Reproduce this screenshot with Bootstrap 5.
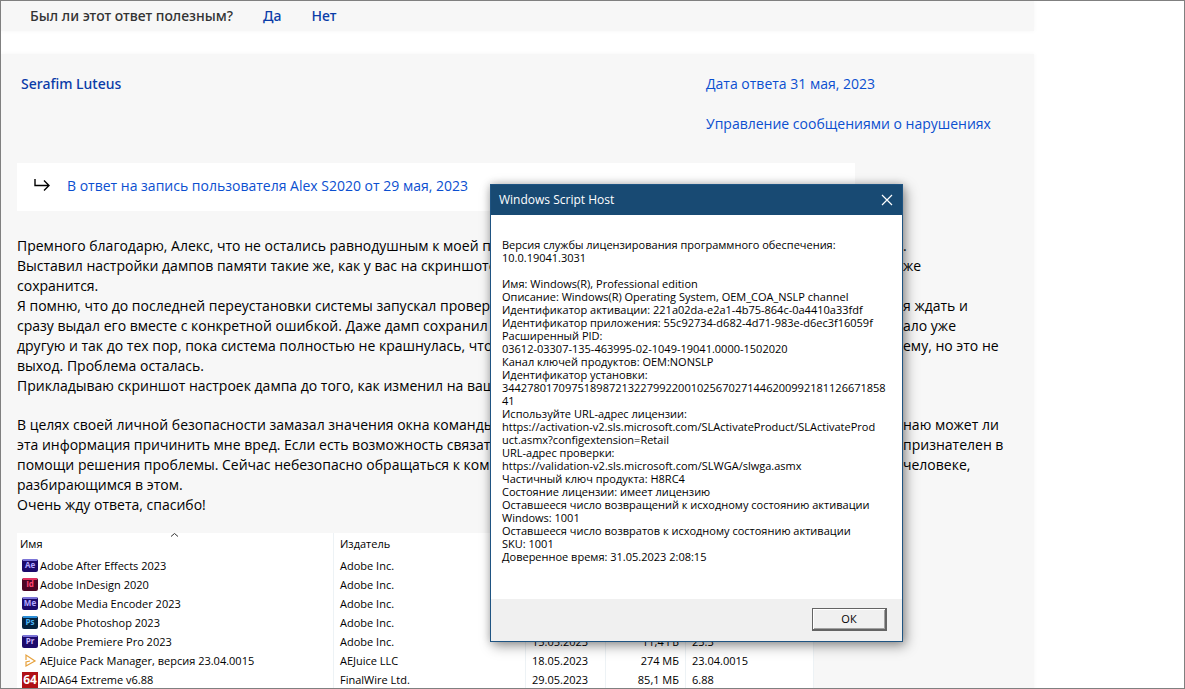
<!DOCTYPE html>
<html lang="ru">
<head>
<meta charset="utf-8">
<meta name="viewport" content="width=device-width, initial-scale=1">
<title>Windows Script Host</title>
<link href="https://cdn.jsdelivr.net/npm/bootstrap@5.3.0/dist/css/bootstrap.min.css" rel="stylesheet">
<style>
  body { font: 14px/20px "Open Sans", "Noto Sans", sans-serif; color: #000; background: #fff; }
  a { color: #0b4fd0; text-decoration: none; }
  .page-frame { border: 1px solid #808080; }
  .feed { width: calc(100% - 150px); }
  .answer { background: #f7f7f7; box-shadow: 0 0 5px rgba(0, 0, 0, .04); }
  .helpful { color: #333; height: 30px; padding-left: 29px; padding-bottom: 1px; gap: 30px; font-family: "Noto Sans", sans-serif; font-weight: 500; }
  .strong-link { color: #0a3ca8; font-weight: 500; font-family: "Noto Sans", sans-serif; }
  .post { margin-top: 23px; padding: 20px 16px 0; }
  .post-meta { width: 312px; }
  .reply-to { background: #fff; width: 838px; max-width: 100%; height: 48px; margin-top: 29px; padding-bottom: 2px; }
  .post-text { margin-top: 25px; }
  .text-line { display: grid; grid-template-columns: 886px auto; justify-content: start; white-space: nowrap; height: 20px; }
  .blank-line { height: 19px; }
  .apps-list { margin-top: 18px; }
  .apps { width: 797px; table-layout: fixed; font-size: 11px; line-height: 19px; background: #fff; border-collapse: separate; border-spacing: 0; }
  .apps th { font-weight: 400; height: 23px; padding: 0 6px 2px; }
  .apps td { height: 19px; padding: 0 6px; white-space: nowrap; }
  .apps th, .apps td { border-right: 1px solid #edf2f5; }
  .apps .app-name { padding-left: 3px; }
  .app-icon { width: 16px; height: 16px; flex: none; margin: 0 2px; }
  .app-icon text { font: 700 8px "Open Sans", sans-serif; text-anchor: middle; }
  .app-icon .big-digits { font-size: 12px; }
  .sort-mark { position: absolute; top: 0; left: 153px; }
  .host-dialog { position: absolute; left: 489px; top: 183px; width: 413px; background: #fff; border: 1px solid #1f5482; box-shadow: 3px 4px 12px rgba(0, 0, 0, .38), 0 0 8px rgba(0, 0, 0, .2); }
  .dialog-title { background: #184a73; color: #fff; height: 30px; padding: 0 8px; font-size: 12px; }
  .close-button { background: none; border: 0; padding: 0; width: 13px; height: 13px; display: flex; }
  .dialog-text { font: 11px/13px "Open Sans", "Noto Sans", sans-serif; padding: 23px 11px 36px; white-space: nowrap; }
  .dialog-actions { background: #f0f0f0; height: 42px; padding: 0 15px 2px; }
  .ok-button { width: 75px; height: 23px; padding: 0; font-size: 11px; line-height: 17px; background: #f0f0f0; color: #000; border: 1px solid #646464; border-right-width: 2px; border-bottom-width: 2px; box-shadow: inset 1px 1px #fff, inset -1px -1px #a0a0a0; }
</style>
</head>
<body>
<div class="page-frame vh-100 overflow-hidden position-relative">
  <main class="feed">
    <section class="answer helpful d-flex align-items-center">
      <span>Был ли этот ответ полезным?</span>
      <a class="strong-link" href="#">Да</a>
      <a class="strong-link" href="#">Нет</a>
    </section>

    <article class="answer post vh-100">
      <header class="d-flex justify-content-between">
        <a class="strong-link ps-1" href="#">Serafim Luteus</a>
        <div class="post-meta d-flex flex-column">
          <a href="#">Дата ответа 31 мая, 2023</a>
          <a class="mt-3 pt-1" href="#">Управление сообщениями о нарушениях</a>
        </div>
      </header>

      <div class="reply-to d-flex align-items-center">
        <svg class="ms-3 me-3" width="18" height="16" viewBox="0 0 18 16" fill="none" stroke="#000" stroke-width="1.4"><path d="M2 1v6.500h14M11 2.500l5 5-5 5"/></svg>
        <a href="#">В ответ на запись пользователя Alex S2020 от 29 мая, 2023</a>
      </div>

      <div class="post-text">
        <div class="text-line"><span>Премного благодарю, Алекс, что не остались равнодушным к моей п</span><span>.</span></div>
        <div class="text-line"><span>Выставил настройки дампов памяти такие же, как у вас на скриншоте</span><span>же</span></div>
        <div class="text-line"><span>сохранится.</span></div>
        <div class="text-line"><span>Я помню, что до последней переустановки системы запускал провер</span><span>я ждать и</span></div>
        <div class="text-line"><span>сразу выдал его вместе с конкретной ошибкой. Даже дамп сохранил</span><span>ало уже</span></div>
        <div class="text-line"><span>другую и так до тех пор, пока система полностью не крашнулась, что</span><span>ему, но это не</span></div>
        <div class="text-line"><span>выход. Проблема осталась.</span></div>
        <div class="text-line"><span>Прикладываю скриншот настроек дампа до того, как изменил на ваш</span></div>
        <div class="blank-line"></div>
        <div class="text-line"><span>В целях своей личной безопасности замазал значения окна команды</span><span>наю может ли</span></div>
        <div class="text-line"><span>эта информация причинить мне вред. Если есть возможность связат</span><span>признателен в</span></div>
        <div class="text-line"><span>помощи решения проблемы. Сейчас небезопасно обращаться к ком</span><span>человеке,</span></div>
        <div class="text-line"><span>разбирающимся в этом.</span></div>
        <div class="text-line"><span>Очень жду ответа, спасибо!</span></div>
      </div>

      <div class="apps-list position-relative">
        <svg class="sort-mark" width="9" height="4" viewBox="0 0 9 4" fill="none" stroke="#333"><path d="M1 3.500L4.500 .5 8 3.500"/></svg>
        <table class="apps">
          <colgroup><col style="width:317px"><col style="width:192px"><col style="width:80px"><col style="width:80px"><col style="width:128px"></colgroup>
          <thead><tr><th class="app-name">Имя</th><th>Издатель</th><th></th><th></th><th></th></tr></thead>
          <tbody>
            <tr><td class="app-name"><div class="d-flex align-items-center"><svg class="app-icon" viewBox="0 0 16 16"><rect y="1" width="16" height="13" rx="2" fill="#1c0a6b"/><path d="M1 2h14" stroke="#7b74d8" stroke-width="2"/><text x="8" y="10" fill="#b3a7ff">Ae</text></svg>Adobe After Effects 2023</div></td><td>Adobe Inc.</td><td></td><td></td><td></td></tr>
            <tr><td class="app-name"><div class="d-flex align-items-center"><svg class="app-icon" viewBox="0 0 16 16"><rect y="1" width="16" height="13" rx="2" fill="#4d0524"/><path d="M1 2h14" stroke="#e0325f" stroke-width="2"/><text x="8" y="10" fill="#ff4673">Id</text></svg>Adobe InDesign 2020</div></td><td>Adobe Inc.</td><td></td><td></td><td></td></tr>
            <tr><td class="app-name"><div class="d-flex align-items-center"><svg class="app-icon" viewBox="0 0 16 16"><rect y="1" width="16" height="13" rx="2" fill="#1c0a6b"/><path d="M1 2h14" stroke="#7b74d8" stroke-width="2"/><text x="8" y="10" fill="#b3a7ff">Me</text></svg>Adobe Media Encoder 2023</div></td><td>Adobe Inc.</td><td></td><td></td><td></td></tr>
            <tr><td class="app-name"><div class="d-flex align-items-center"><svg class="app-icon" viewBox="0 0 16 16"><rect y="1" width="16" height="13" rx="2" fill="#04233f"/><path d="M1 2h14" stroke="#2c8fd8" stroke-width="2"/><text x="8" y="10" fill="#4cb4f5">Ps</text></svg>Adobe Photoshop 2023</div></td><td>Adobe Inc.</td><td></td><td></td><td></td></tr>
            <tr><td class="app-name"><div class="d-flex align-items-center"><svg class="app-icon" viewBox="0 0 16 16"><rect y="1" width="16" height="13" rx="2" fill="#1c0a6b"/><path d="M1 2h14" stroke="#7b74d8" stroke-width="2"/><text x="8" y="10" fill="#c9b8ff">Pr</text></svg>Adobe Premiere Pro 2023</div></td><td>Adobe Inc.</td><td>15.05.2023</td><td class="text-end">11,4 ГБ</td><td>23.3</td></tr>
            <tr><td class="app-name"><div class="d-flex align-items-center"><svg class="app-icon" viewBox="0 0 16 16" fill="none" stroke="#e6a13c" stroke-width="1.2"><path d="M4 7V2l9 6-9 5V9l4-1"/></svg>AEJuice Pack Manager, версия 23.04.0015</div></td><td>AEJuice LLC</td><td>18.05.2023</td><td class="text-end">274 МБ</td><td>23.04.0015</td></tr>
            <tr><td class="app-name"><div class="d-flex align-items-center"><svg class="app-icon" viewBox="0 0 16 16"><rect width="16" height="16" fill="#b01116"/><text class="big-digits" x="8" y="12" fill="#fff">64</text></svg>AIDA64 Extreme v6.88</div></td><td>FinalWire Ltd.</td><td>29.05.2023</td><td class="text-end">85,1 МБ</td><td>6.88</td></tr>
          </tbody>
        </table>
      </div>
    </article>
  </main>

  <div class="host-dialog" role="dialog" aria-labelledby="host-title">
    <div class="dialog-title d-flex align-items-center justify-content-between">
      <span id="host-title">Windows Script Host</span>
      <button class="close-button" type="button" aria-label="Закрыть"><svg width="12" height="12" viewBox="0 0 12 12" stroke="#fff" stroke-width="1.2"><path d="M1 1l10 10M11 1L1 11"/></svg></button>
    </div>
    <div class="dialog-text">Версия службы лицензирования программного обеспечения:<br>10.0.19041.3031<br><br>Имя: Windows(R), Professional edition<br>Описание: Windows(R) Operating System, OEM_COA_NSLP channel<br>Идентификатор активации: 221a02da-e2a1-4b75-864c-0a4410a33fdf<br>Идентификатор приложения: 55c92734-d682-4d71-983e-d6ec3f16059f<br>Расширенный PID:<br>03612-03307-135-463995-02-1049-19041.0000-1502020<br>Канал ключей продуктов: OEM:NONSLP<br>Идентификатор установки:<br>3442780170975189872132279922001025670271446200992181126671858<br>41<br>Используйте URL-адрес лицензии:<br>https://activation-v2.sls.microsoft.com/SLActivateProduct/SLActivateProd<br>uct.asmx?configextension=Retail<br>URL-адрес проверки:<br>https://validation-v2.sls.microsoft.com/SLWGA/slwga.asmx<br>Частичный ключ продукта: H8RC4<br>Состояние лицензии: имеет лицензию<br>Оставшееся число возвращений к исходному состоянию активации<br>Windows: 1001<br>Оставшееся число возвратов к исходному состоянию активации<br>SKU: 1001<br>Доверенное время: 31.05.2023 2:08:15</div>
    <div class="dialog-actions d-flex align-items-center justify-content-end">
      <button class="ok-button" type="button">ОК</button>
    </div>
  </div>
</div>
<script src="https://cdn.jsdelivr.net/npm/bootstrap@5.3.0/dist/js/bootstrap.bundle.min.js"></script>
</body>
</html>
